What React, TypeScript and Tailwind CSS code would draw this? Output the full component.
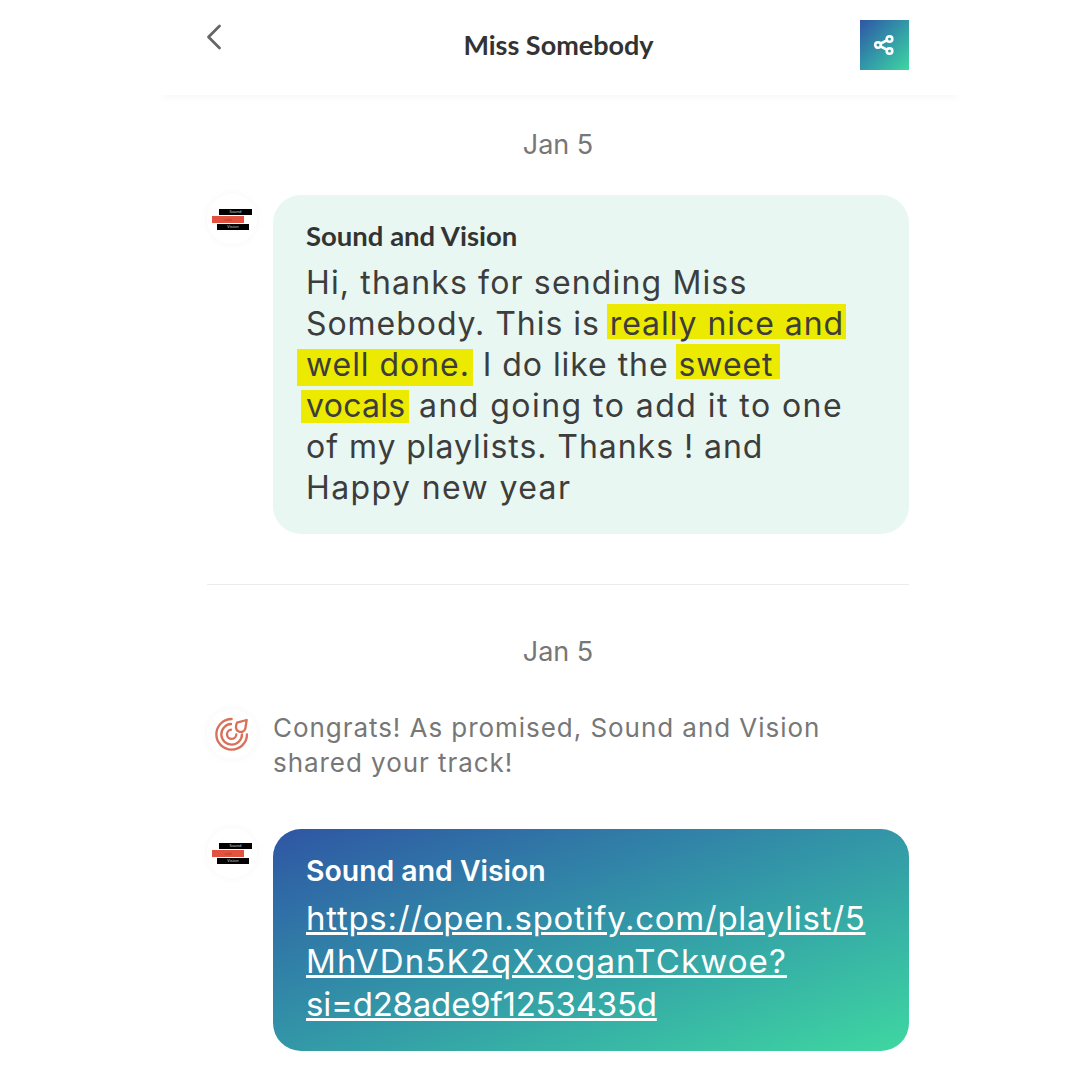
import React from "react";

const body = "font-['Inter','Liberation_Sans',sans-serif]";
const head = "font-['Lato','Liberation_Sans',sans-serif]";

function Avatar({ children }: { children: React.ReactNode }) {
  return (
    <div className="w-[50px] h-[50px] shrink-0 rounded-full bg-white shadow-[0_0_10px_rgba(0,0,0,0.04)] flex items-center justify-center">
      {children}
    </div>
  );
}

function SvLogo() {
  return (
    <div className="flex flex-col w-[42px] gap-[1px] ml-[2px] text-[4px]">
      <div className="ml-[7px] w-[33px] h-[6px] bg-black text-[#ddd] leading-[6px] text-center">Sound</div>
      <div className="w-[32px] h-[7px] bg-[#e2533f] text-[#a83a2a] leading-[7px] text-center">and</div>
      <div className="ml-[5px] w-[32px] h-[6px] bg-black text-[#ddd] leading-[6px] text-center">Vision</div>
    </div>
  );
}

function Target() {
  return (
    <svg width="34" height="35" viewBox="72 45 102 105" fill="none" stroke="#d9705a" strokeWidth="7" strokeLinecap="round" strokeLinejoin="round">
      <path d="M122 51 A46 46 0 1 0 168 97" />
      <path d="M120 66 A31 31 0 1 0 153 97" />
      <path d="M120 83 A14 14 0 1 0 136 97" />
      <path d="M167 54 L138 62 Q130 80 142 88 Q158 94 163 80 Z" />
    </svg>
  );
}

function DateLabel({ className }: { className: string }) {
  return <div className={`${body} text-center text-[27px] leading-[34px] text-[#777] ${className}`}>Jan 5</div>;
}

const hl = "bg-[#ecea00] inline-block leading-[28px]";

export default function App() {
  return (
    <div className="w-[1080px] h-[1080px] bg-white pl-[160px] overflow-hidden">
      <div className="w-[800px] flex flex-col">
        <header className="h-[95px] shrink-0 pl-[46px] pr-[51px] flex items-start justify-between shadow-[0_6px_6px_-3px_rgba(0,0,0,0.03)] relative">
          <svg className="mt-[24px]" width="16" height="26" viewBox="0 0 16 26" fill="none" stroke="#666" strokeWidth="2.8" strokeLinecap="round" strokeLinejoin="round">
            <path d="M13.5 2 L2.5 13 L13.5 24" />
          </svg>
          <div className={`${head} mt-[28px] ml-[35px] text-[27px] leading-[34px] font-bold text-[#333]`}>Miss Somebody</div>
          <div className="mt-[20px] w-[49px] h-[50px] bg-gradient-to-br from-[#2f55a4] to-[#3fd7a0] flex items-center justify-center">
            <svg className="-mt-[1px]" width="22" height="22" viewBox="0 0 22 22" fill="none" stroke="#fff" strokeWidth="2.6">
              <circle cx="16.5" cy="5" r="2.8" />
              <circle cx="5" cy="11" r="2.8" />
              <circle cx="16.5" cy="17" r="2.8" />
              <path d="M7.8 9.5 L13.8 6.4 M7.8 12.5 L13.8 15.6" />
            </svg>
          </div>
        </header>

        <div className="pl-[47px] pr-[51px] flex flex-col">
          <DateLabel className="mt-[33px]" />

          <div className="mt-[33px] flex gap-[16px]">
            <div className="-mt-[1px] mb-auto"><Avatar><SvLogo /></Avatar></div>
            <div className="flex-1 h-[339px] rounded-[28px] bg-[#e8f7f1] pl-[33px] pt-[25px]">
              <div className={`${head} text-[27.5px] leading-[32px] font-bold text-[#333]`}>Sound and Vision</div>
              <div className={`${body} mt-[10px] text-[32px] leading-[41px] tracking-[0.95px] text-[#3d3d3d] whitespace-nowrap`}>
                <div className="h-[41px] tracking-[1.15px]">Hi, thanks for sending Miss</div>
                <div className="h-[41px]">Somebody. This is <span className={`${hl} -ml-[3px] pl-[3px] pr-[2px] pt-[6px] pb-[1px]`}>really nice and</span></div>
                <div className="h-[41px]"><span className={`${hl} -ml-[9px] pl-[9px] pr-[3px] pt-[2px] pb-[7px]`}>well done.</span> I do like the <span className={`${hl} -ml-[3px] pl-[3px] pr-[6px] pt-[7px]`}>sweet</span></div>
                <div className="h-[41px] tracking-[1.45px]"><span className={`${hl} -ml-[5px] pl-[5px] pr-[3px] pt-[2px] pb-[3px] tracking-[0.3px]`}>vocals</span> and going to add it to one</div>
                <div className="h-[41px]">of my playlists. Thanks ! and</div>
                <div className="h-[41px] tracking-[1.4px]">Happy new year</div>
              </div>
            </div>
          </div>

          <div className="mt-[50px] h-[1px] bg-[#ececec]" />

          <DateLabel className="mt-[50px]" />

          <div className="mt-[41px] flex gap-[16px]">
            <div className="mt-[-1px] mb-auto"><Avatar><Target /></Avatar></div>
            <div className={`${body} text-[26px] leading-[35px] tracking-[0.95px] text-[#777]`}>
              <div>Congrats! As promised, Sound and Vision</div>
              <div>shared your track!</div>
            </div>
          </div>

          <div className="mt-[49px] flex gap-[16px]">
            <div className="-mt-[1px] mb-auto"><Avatar><SvLogo /></Avatar></div>
            <div className="flex-1 h-[222px] rounded-[28px] bg-gradient-to-br from-[#2f55a4] to-[#3fd7a0] pl-[33px] pt-[26px] text-white">
              <div className={`${body} text-[28.4px] leading-[32px] font-semibold`}>Sound and Vision</div>
              <div className={`${body} mt-[10px] text-[33px] leading-[43px] underline whitespace-nowrap`}>
                <div className="tracking-[0.7px]">https://open.spotify.com/playlist/5</div>
                <div className="tracking-[1.1px]">MhVDn5K2qXxoganTCkwoe?</div>
                <div className="tracking-[-0.2px]">si=d28ade9f1253435d</div>
              </div>
            </div>
          </div>
        </div>
      </div>
    </div>
  );
}
